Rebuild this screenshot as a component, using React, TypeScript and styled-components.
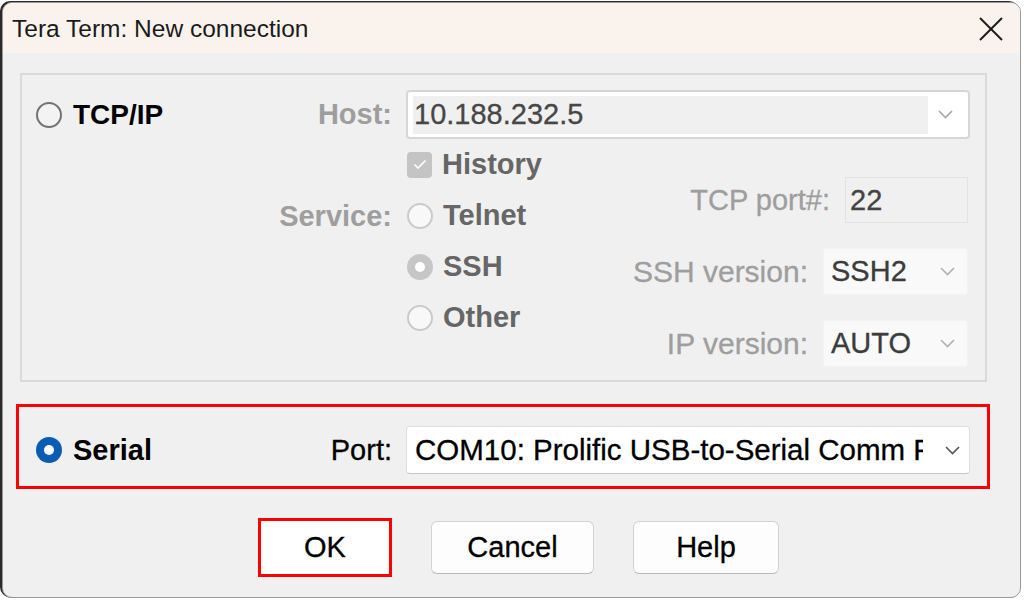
import React from "react";
import styled, { createGlobalStyle } from "styled-components";

const Global = createGlobalStyle`
  html, body { margin: 0; padding: 0; background: #ffffff; }
  body { font-family: "Liberation Sans", Arial, sans-serif; }
  #root { width: 1024px; height: 601px; }
`;

const Page = styled.div`
  width: 1024px;
  height: 601px;
  box-sizing: border-box;
  padding: 2px 0 0 2px;
  background: #ffffff;
  overflow: hidden;
`;

const Window = styled.div`
  width: 1019px;
  height: 596px;
  box-sizing: border-box;
  border: 1px solid #9a9a9a;
  border-radius: 10px;
  overflow: hidden;
  background: #f0f0f0;
  box-shadow: -2px -1px 0 #2a2a2a, -1px 0 0 #555555;
  display: flex;
  flex-direction: column;
`;

const TitleBar = styled.div`
  height: 50px;
  flex: none;
  box-sizing: border-box;
  background: #faf3ed;
  display: flex;
  align-items: center;
  justify-content: space-between;
  padding: 2px 17px 0 9px;
`;

const Title = styled.span`
  font-size: 24.5px;
  color: #1b1b1b;
`;

const CloseButton = styled.span`
  display: flex;
  width: 24px;
  height: 24px;
`;

const Body = styled.div`
  display: flex;
  flex-direction: column;
  padding: 0 13px;
`;

const GroupBox = styled.div`
  margin: 20px 0 0 4px;
  width: 967px;
  box-sizing: border-box;
  border: 2px solid #dadada;
  padding: 15px 15px 13px 14px;
  display: grid;
  grid-template-columns: 356px 564px;
  column-gap: 14px;
`;

const LeftCell = styled.div`
  display: flex;
  flex-direction: column;
`;

const TopRow = styled.div<{ $h: number }>`
  height: ${(p) => p.$h}px;
  display: flex;
  align-items: center;
  justify-content: space-between;
`;

const RadioLabel = styled.label`
  display: flex;
  align-items: center;
  gap: 11px;
`;

const Text = styled.span<{ $tone?: "dark" | "muted" | "faint"; $bold?: boolean; $size?: number }>`
  font-size: ${(p) => p.$size ?? 29}px;
  font-weight: ${(p) => (p.$bold ? 700 : 400)};
  color: ${(p) => (p.$tone === "faint" ? "#9e9e9e" : p.$tone === "muted" ? "#666666" : "#000000")};
  -webkit-text-stroke: ${(p) => (p.$bold ? "0" : "0.3px")};
  white-space: nowrap;
`;

const ServiceLabel = styled.div`
  margin-top: 60px;
  height: 34px;
  line-height: 34px;
  text-align: right;
  font-size: 29px;
  font-weight: 700;
  color: #9e9e9e;
`;

const RightCell = styled.div`
  display: flex;
  flex-direction: column;
`;

const HostCombo = styled.div`
  height: 49px;
  box-sizing: border-box;
  border: 2px solid #d6d6d6;
  border-radius: 4px;
  background: #ffffff;
  display: flex;
  align-items: center;
  padding: 0 5px;
`;

const HostField = styled.div`
  width: 515px;
  height: 38px;
  background: #f0f0f0;
  display: flex;
  align-items: center;
  padding-left: 1px;
  box-sizing: border-box;
  font-size: 29px;
  color: #474747;
  -webkit-text-stroke: 0.3px;
`;

const ChevronWrap = styled.span<{ $mr: number }>`
  display: flex;
  margin-left: auto;
  margin-right: ${(p) => p.$mr}px;
`;

const Lower = styled.div`
  display: flex;
  justify-content: space-between;
`;

const Options = styled.div`
  display: flex;
  flex-direction: column;
  padding-left: 1px;
`;

const OptionRow = styled.div`
  height: 51px;
  display: flex;
  align-items: center;
  gap: 10px;
`;

const Fields = styled.div`
  display: flex;
  flex-direction: column;
  align-items: flex-end;
  gap: 25px;
  margin-top: 38px;
  margin-right: 2px;
`;

const FieldRow = styled.div`
  display: flex;
  align-items: center;
  gap: 15px;
`;

const PortBox = styled.div`
  width: 123px;
  height: 46px;
  box-sizing: border-box;
  border: 1px solid #e3e3e3;
  background: #f0f0f0;
  display: flex;
  align-items: center;
  padding-left: 4px;
  font-size: 29px;
  color: #444444;
  -webkit-text-stroke: 0.3px;
`;

const SmallSelect = styled.div<{ $h: number }>`
  width: 145px;
  height: ${(p) => p.$h}px;
  box-sizing: border-box;
  background: #f9f9f9;
  border: 1px solid #f3f3f3;
  border-radius: 3px;
  display: flex;
  align-items: center;
  padding-left: 7px;
  font-size: 29px;
  color: #3c3c3c;
  -webkit-text-stroke: 0.3px;
`;

const SerialBox = styled.div`
  margin-top: 22px;
  width: 974px;
  box-sizing: border-box;
  border: 3px solid #ff0000;
  padding: 19px 17px 12px 17px;
  display: grid;
  grid-template-columns: 356px 564px;
  column-gap: 14px;
`;

const PortSelect = styled.div`
  height: 48px;
  box-sizing: border-box;
  background: #ffffff;
  border: 1px solid #dedede;
  border-bottom-color: #c6c6c6;
  border-radius: 4px;
  display: flex;
  align-items: center;
  padding-left: 8px;
`;

const PortText = styled.span`
  width: 508px;
  overflow: hidden;
  white-space: nowrap;
  font-size: 29.5px;
  color: #000000;
  -webkit-text-stroke: 0.3px;
`;

const ButtonRow = styled.div`
  margin-top: 29px;
  padding-left: 242px;
  display: flex;
  align-items: center;
  gap: 39px;
`;

const Highlight = styled.div`
  border: 3px solid #ff0000;
  display: flex;
`;

const Button = styled.button<{ $w: number }>`
  width: ${(p) => p.$w}px;
  height: 53px;
  box-sizing: border-box;
  background: #fdfdfd;
  border: 1px solid #d2d2d2;
  border-bottom-color: #b9b9b9;
  border-radius: 6px;
  font-family: "Liberation Sans", Arial, sans-serif;
  font-size: 29px;
  color: #000000;
  -webkit-text-stroke: 0.3px;
  padding: 0;
`;

const DefaultButton = styled(Button)`
  border: 1px solid #ffffff;
  border-radius: 2px;
  background: #ffffff;
`;

type RadioKind = "off" | "disabled" | "disabledOn" | "on";

const RadioCircle = styled.span<{ $kind: RadioKind }>`
  flex: none;
  width: 26px;
  height: 26px;
  box-sizing: border-box;
  border-radius: 50%;
  display: flex;
  align-items: center;
  justify-content: center;
  border: ${(p) =>
    p.$kind === "off"
      ? "2.5px solid #737373"
      : p.$kind === "disabled"
      ? "2px solid #cacaca"
      : "none"};
  background: ${(p) =>
    p.$kind === "off"
      ? "#f3f3f3"
      : p.$kind === "disabled"
      ? "#f8f8f8"
      : p.$kind === "disabledOn"
      ? "#c6c6c6"
      : "#0b5cb5"};
`;

const RadioDot = styled.span`
  width: 10px;
  height: 10px;
  border-radius: 50%;
  background: #ffffff;
`;

const Radio = ({ kind }: { kind: RadioKind }) => (
  <RadioCircle $kind={kind}>{(kind === "on" || kind === "disabledOn") && <RadioDot />}</RadioCircle>
);

const CheckBox = styled.span`
  flex: none;
  width: 25px;
  height: 26px;
  border-radius: 4px;
  background: #c4c4c4;
  display: flex;
  align-items: center;
  justify-content: center;
`;

const Chevron = ({ color, w = 15 }: { color: string; w?: number }) => (
  <svg width={w} height={9} viewBox="0 0 15 9" fill="none">
    <polyline points="1,1 7.5,7.5 14,1" stroke={color} strokeWidth="1.6" />
  </svg>
);

export default function App() {
  return (
    <Page>
      <Global />
      <Window>
        <TitleBar>
          <Title>Tera Term: New connection</Title>
          <CloseButton>
            <svg width="24" height="24" viewBox="0 0 24 24">
              <line x1="1" y1="1" x2="23" y2="23" stroke="#1c1c1c" strokeWidth="2" />
              <line x1="23" y1="1" x2="1" y2="23" stroke="#1c1c1c" strokeWidth="2" />
            </svg>
          </CloseButton>
        </TitleBar>
        <Body>
          <GroupBox>
            <LeftCell>
              <TopRow $h={49}>
                <RadioLabel>
                  <Radio kind="off" />
                  <Text $bold $size={28}>TCP/IP</Text>
                </RadioLabel>
                <Text $bold $tone="faint">Host:</Text>
              </TopRow>
              <ServiceLabel>Service:</ServiceLabel>
            </LeftCell>
            <RightCell>
              <HostCombo>
                <HostField>10.188.232.5</HostField>
                <ChevronWrap $mr={10}>
                  <Chevron color="#a6a6a6" />
                </ChevronWrap>
              </HostCombo>
              <Lower>
                <Options>
                  <OptionRow>
                    <CheckBox>
                      <svg width="14" height="11" viewBox="0 0 14 11" fill="none">
                        <polyline points="1.5,5.5 5,9 12.5,1.5" stroke="#ffffff" strokeWidth="1.6" />
                      </svg>
                    </CheckBox>
                    <Text $bold $tone="muted">History</Text>
                  </OptionRow>
                  <OptionRow>
                    <Radio kind="disabled" />
                    <Text $bold $tone="muted">Telnet</Text>
                  </OptionRow>
                  <OptionRow>
                    <Radio kind="disabledOn" />
                    <Text $bold $tone="muted">SSH</Text>
                  </OptionRow>
                  <OptionRow>
                    <Radio kind="disabled" />
                    <Text $bold $tone="muted">Other</Text>
                  </OptionRow>
                </Options>
                <Fields>
                  <FieldRow>
                    <Text $tone="faint">TCP port#:</Text>
                    <PortBox>22</PortBox>
                  </FieldRow>
                  <FieldRow>
                    <Text $tone="faint" $size={30}>SSH version:</Text>
                    <SmallSelect $h={47}>
                      SSH2
                      <ChevronWrap $mr={12}>
                        <Chevron color="#b0b0b0" />
                      </ChevronWrap>
                    </SmallSelect>
                  </FieldRow>
                  <FieldRow>
                    <Text $tone="faint" $size={30}>IP version:</Text>
                    <SmallSelect $h={47}>
                      AUTO
                      <ChevronWrap $mr={12}>
                        <Chevron color="#b0b0b0" />
                      </ChevronWrap>
                    </SmallSelect>
                  </FieldRow>
                </Fields>
              </Lower>
            </RightCell>
          </GroupBox>
          <SerialBox>
            <TopRow $h={48}>
              <RadioLabel>
                <Radio kind="on" />
                <Text $bold>Serial</Text>
              </RadioLabel>
              <Text>Port:</Text>
            </TopRow>
            <PortSelect>
              <PortText>COM10: Prolific USB-to-Serial Comm Port (COM10)</PortText>
              <ChevronWrap $mr={9}>
                <Chevron color="#555555" w={15} />
              </ChevronWrap>
            </PortSelect>
          </SerialBox>
          <ButtonRow>
            <Highlight>
              <DefaultButton $w={128}>OK</DefaultButton>
            </Highlight>
            <Button $w={163}>Cancel</Button>
            <Button $w={146}>Help</Button>
          </ButtonRow>
        </Body>
      </Window>
    </Page>
  );
}
